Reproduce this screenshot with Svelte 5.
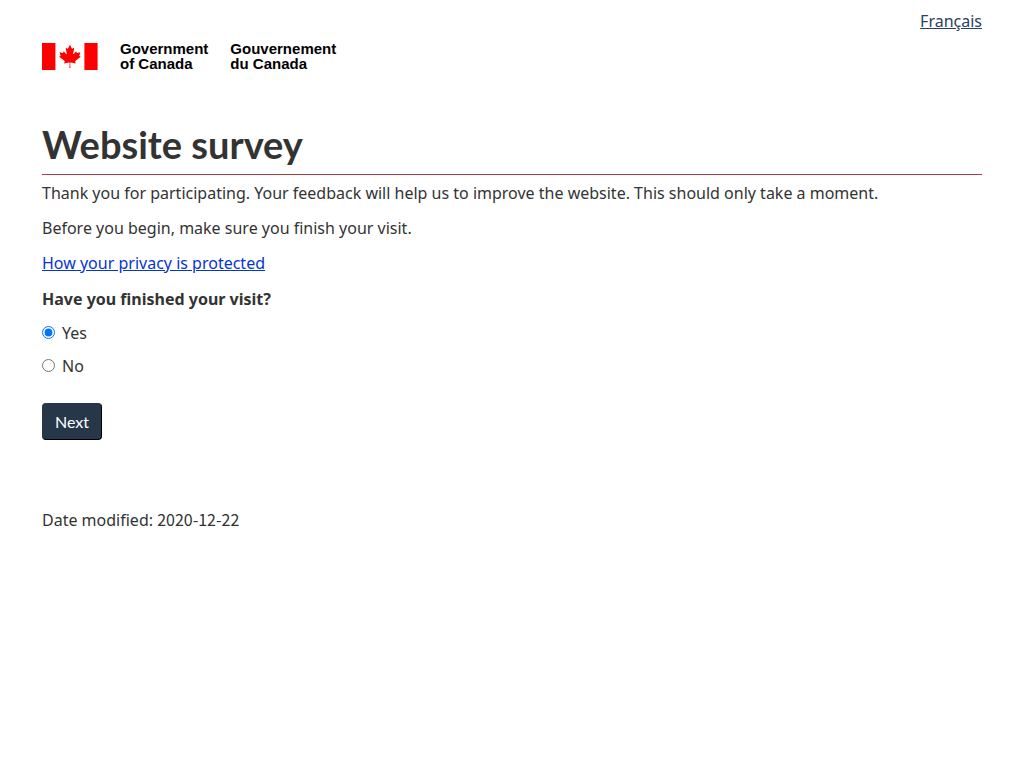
<script lang="ts">
  let finished = $state('yes');
</script>

<header>
  <nav class="language">
    <a href="#fr" lang="fr">Français</a>
  </nav>
  <div class="brand">
    <svg class="flag" viewBox="0 0 56 27" aria-hidden="true">
      <path fill="#f00" d="M0 0h13.4v27H0zM42.4 0H55.6v27H42.4z" />
      <path
        fill="#f00"
        transform="translate(.1 -.6) scale(.0058)"
        d="m4890 4430-45-863a95 95 0 0 1 111-98l859 151-116-320a65 65 0 0 1 20-73l941-762-212-99a65 65 0 0 1-34-79l186-572-542 115a65 65 0 0 1-73-38l-105-247-423 454a65 65 0 0 1-111-57l204-1052-327 189a65 65 0 0 1-91-27l-332-652-332 652a65 65 0 0 1-91 27l-327-189 204 1052a65 65 0 0 1-111 57l-423-454-105 247a65 65 0 0 1-73 38l-542-115 186 572a65 65 0 0 1-34 79l-212 99 941 762a65 65 0 0 1 20 73l-116 320 859-151a95 95 0 0 1 111 98l-45 863z"
      />
    </svg>
    <span class="wordmark">Government<br />of Canada</span>
    <span class="wordmark" lang="fr">Gouvernement<br />du Canada</span>
  </div>
</header>

<main>
  <h1>Website survey</h1>
  <p>Thank you for participating. Your feedback will help us to improve the website. This should only take a moment.</p>
  <p>Before you begin, make sure you finish your visit.</p>
  <p><a class="privacy" href="#privacy">How your privacy is protected</a></p>

  <form onsubmit={(e) => e.preventDefault()}>
    <fieldset>
      <legend>Have you finished your visit?</legend>
      <label>
        <input type="radio" name="finished" value="yes" bind:group={finished} />
        Yes
      </label>
      <label>
        <input type="radio" name="finished" value="no" bind:group={finished} />
        No
      </label>
    </fieldset>
    <button type="submit">Next</button>
  </form>

  <p class="modified">Date modified: <time datetime="2020-12-22">2020-12-22</time></p>
</main>

<style>
  :global(body) {
    margin: 0;
    background: #fff;
    color: #333;
    font-family: "Noto Sans", sans-serif;
    font-size: 16px;
    line-height: 23px;
  }

  header, main {
    max-width: 940px;
    margin: 0 auto;
    padding: 0 42px;
  }

  .language {
    display: flex;
    justify-content: flex-end;
    padding-top: 10px;
  }

  .language a {
    color: #284162;
  }

  .brand {
    display: flex;
    align-items: center;
    gap: 22px;
    padding-top: 8px;
  }

  .flag {
    width: 56px;
    height: 27px;
  }

  .wordmark {
    color: #000;
    font-family: "Liberation Sans", sans-serif;
    font-size: 15px;
    font-weight: 700;
    line-height: 15px;
  }

  h1 {
    margin: 49px 0 7px;
    padding-bottom: 5px;
    border-bottom: 1px solid #af3c43;
    font-family: Lato, sans-serif;
    font-size: 38px;
    font-weight: 700;
    line-height: 49px;
  }

  p {
    margin: 0 0 12px;
  }

  .privacy {
    color: #0535d2;
  }

  fieldset {
    margin: 0;
    padding: 0;
    border: 0;
  }

  legend {
    margin-bottom: 11px;
    padding: 0;
    font-weight: 700;
  }

  form {
    padding-top: 1px;
  }

  label {
    display: flex;
    align-items: center;
    gap: 7px;
    width: fit-content;
    margin-bottom: 10px;
  }

  input {
    width: 13px;
    height: 13px;
    margin: 0 0 2px;
  }

  button {
    margin-top: 15px;
    padding: 6px 12px;
    border: 1px solid;
    border-color: #26374a #000 #000 #26374a;
    border-radius: 4px;
    background: #26374a;
    color: #fff;
    font-family: Lato, sans-serif;
    font-size: 16px;
    line-height: 23px;
    cursor: pointer;
  }

  .modified {
    margin-top: 69px;
  }

  time {
    font-family: "Noto Sans CJK SC", "Noto Sans", sans-serif;
    line-height: 16px;
  }
</style>
